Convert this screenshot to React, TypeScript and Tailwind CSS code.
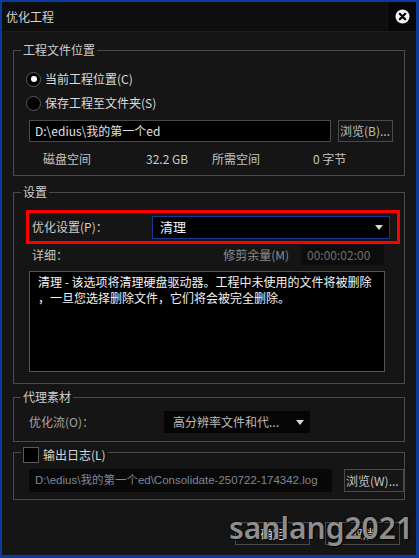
import React from "react";

const Group = ({
  title,
  className,
  children,
}: {
  title: React.ReactNode;
  className: string;
  children?: React.ReactNode;
}) => {
  return (
    <fieldset className={`mx-[11px] border border-[#4a4a4a] ${className}`}>
      <legend className="ml-[7px] h-[14px] px-[2px] text-[12px] leading-[14px] text-[#cfcfcf]">
        {title}
      </legend>
      {children}
    </fieldset>
  );
};

const Radio = ({ checked, label }: { checked?: boolean; label: string }) => (
  <div className="ml-[12px] flex h-[16px] items-center gap-[4px]">
    <div className="flex h-[15px] w-[15px] items-center justify-center rounded-full border border-[#5a5a5a] bg-black">
      {checked && <div className="h-[6px] w-[6px] rounded-full bg-white" />}
    </div>
    <span className="text-[12px] text-[#dcdcdc]">{label}</span>
  </div>
);

const Arrow = () => (
  <svg width="8" height="5" viewBox="0 0 8 5">
    <path d="M0 0 H8 L4 5 Z" fill="#d8d8d8" />
  </svg>
);

export default function App() {
  return (
    <div className="relative flex h-[558px] w-[419px] flex-col border-t-2 border-r-[3px] border-b-[3px] border-l-2 border-[#0a3b9c] bg-[#151515] text-[12px] [font-family:'Noto_Sans_CJK_SC','Noto_Sans',sans-serif]">
      {/* title bar */}
      <div className="flex h-[30px] shrink-0 items-center border-b border-[#1c1c1c] bg-[#0e0e0e]">
        <span className="flex-1 pl-[4px] text-[12px] text-[#d4d4d4]">优化工程</span>
        <div className="flex h-full w-[29px] items-center justify-center border-l border-[#161616] bg-[#060606]">
          <svg width="15" height="15" viewBox="0 0 15 15">
            <circle cx="7.5" cy="7.5" r="7" fill="#f2f2f2" />
            <path d="M4.8 4.8 L10.2 10.2 M10.2 4.8 L4.8 10.2" stroke="#000" strokeWidth="2.2" strokeLinecap="round" />
          </svg>
        </div>
      </div>

      {/* 工程文件位置 */}
      <Group title="工程文件位置" className="mt-[11px] h-[133px]">
        <div className="mt-[14px]">
          <Radio checked label="当前工程位置(C)" />
        </div>
        <div className="mt-[8px]">
          <Radio label="保存工程至文件夹(S)" />
        </div>
        <div className="mt-[9px] flex h-[22px] items-stretch">
          <div className="ml-[15px] flex w-[302px] items-center border border-[#4a4a4a] bg-black pl-[5px] text-[#e2e2e2]">
            D:\edius\我的第一个ed
          </div>
          <div className="ml-[7px] flex w-[55px] items-center overflow-hidden border border-[#4a4a4a] bg-[#161616] pl-[1px] whitespace-nowrap text-[#bdbdbd]">
            浏览(B)...
          </div>
        </div>
        <div className="mt-[9px] flex h-[16px] items-center text-[#c4c4c4]">
          <span className="ml-[29px] w-[103px]">磁盘空间</span>
          <span className="w-[66px] text-[#c6ccd2]">32.2 GB</span>
          <span className="w-[101px]">所需空间</span>
          <span>0 字节</span>
        </div>
      </Group>

      {/* 设置 */}
      <Group title="设置" className="mt-[9px] h-[199px]">
        <div className="mt-[11px] mr-[4px] ml-[12px] flex h-[34px] items-center border-[3px] border-[#ff0000] pr-[7px] pl-[3px]">
          <span className="w-[120px] text-[#cdcdcd]">优化设置(P)：</span>
          <div className="flex h-[23px] flex-1 items-center justify-between border border-[#17388f] bg-black pr-[6px] pl-[7px]">
            <span className="text-[13px] text-[#f2f2f2]">清理</span>
            <Arrow />
          </div>
        </div>
        <div className="mt-[1px] flex h-[20px] items-center">
          <span className="ml-[18px] flex-1 text-[#c4c4c4]">详细：</span>
          <span className="text-[#8c8c8c]">修剪余量(M)</span>
          <div className="mr-[20px] ml-[12px] flex h-[20px] w-[83px] items-center bg-[#0c0c0c] pl-[6px] text-[#6f6f6f]">
            00:00:02:00
          </div>
        </div>
        <div className="mt-[6px] ml-[15px] h-[101px] w-[356px] overflow-hidden border border-[#555] bg-black pt-[2px] pl-[8px] text-[12px] leading-[16px] whitespace-nowrap text-[#f4f4f4]">
          <div>清理 - 该选项将清理硬盘驱动器。工程中未使用的文件将被删除</div>
          <div>，一旦您选择删除文件，它们将会被完全删除。</div>
        </div>
      </Group>

      {/* 代理素材 */}
      <Group title="代理素材" className="mt-[6px] h-[52px]">
        <div className="mt-[7px] flex h-[22px] items-center">
          <span className="ml-[15px] w-[135px] text-[#a4a4a4]">优化流(O)：</span>
          <div className="flex h-[22px] w-[146px] items-center justify-between bg-[#050505] pr-[6px] pl-[9px] text-[#bcbcbc]">
            <span>高分辨率文件和代...</span>
            <Arrow />
          </div>
        </div>
      </Group>

      {/* 输出日志 */}
      <Group
        title={
          <span className="mt-[2px] flex h-[16px] items-center gap-[4px]">
            <span className="h-[16px] w-[16px] border border-[#5a5a5a] bg-black" />
            <span className="text-[#d6d6d6]">输出日志(L)</span>
          </span>
        }
        className="mt-[3px] h-[55px]"
      >
        <div className="mt-[10px] flex h-[23px]">
          <div className="ml-[15px] flex w-[303px] items-center overflow-hidden rounded-[2px] bg-[#080808] pl-[6px] text-[11.5px] whitespace-nowrap text-[#7d8797] [font-family:'Liberation_Sans','Noto_Sans_CJK_SC',sans-serif]">
            D:\edius\我的第一个ed\Consolidate-250722-174342.log
          </div>
          <div className="ml-[12px] flex w-[60px] items-center border border-[#4a4a4a] bg-[#161616] pl-[1px] whitespace-nowrap text-[#c4c4c4]">
            浏览(W)...
          </div>
        </div>
      </Group>

      {/* buttons */}
      <div className="mt-[22px] flex h-[23px] justify-end gap-[15px] pr-[16px]">
        <div className="flex w-[75px] items-center justify-center border border-[#4a4a4a] bg-[#151515] text-[#e6e6e6]">
          确定
        </div>
        <div className="flex w-[75px] items-center justify-center border border-[#4a4a4a] bg-[#151515] text-[#e6e6e6]">
          取消
        </div>
      </div>

      {/* watermark */}
      <div className="pointer-events-none absolute top-[506px] left-[227px] text-[30px] leading-[40px] font-semibold text-[#8e8e8e] [font-family:'Noto_Sans',sans-serif] [text-shadow:0_0_2px_#000,1px_1px_1px_#000]">
        sanlang2021
      </div>
    </div>
  );
}
